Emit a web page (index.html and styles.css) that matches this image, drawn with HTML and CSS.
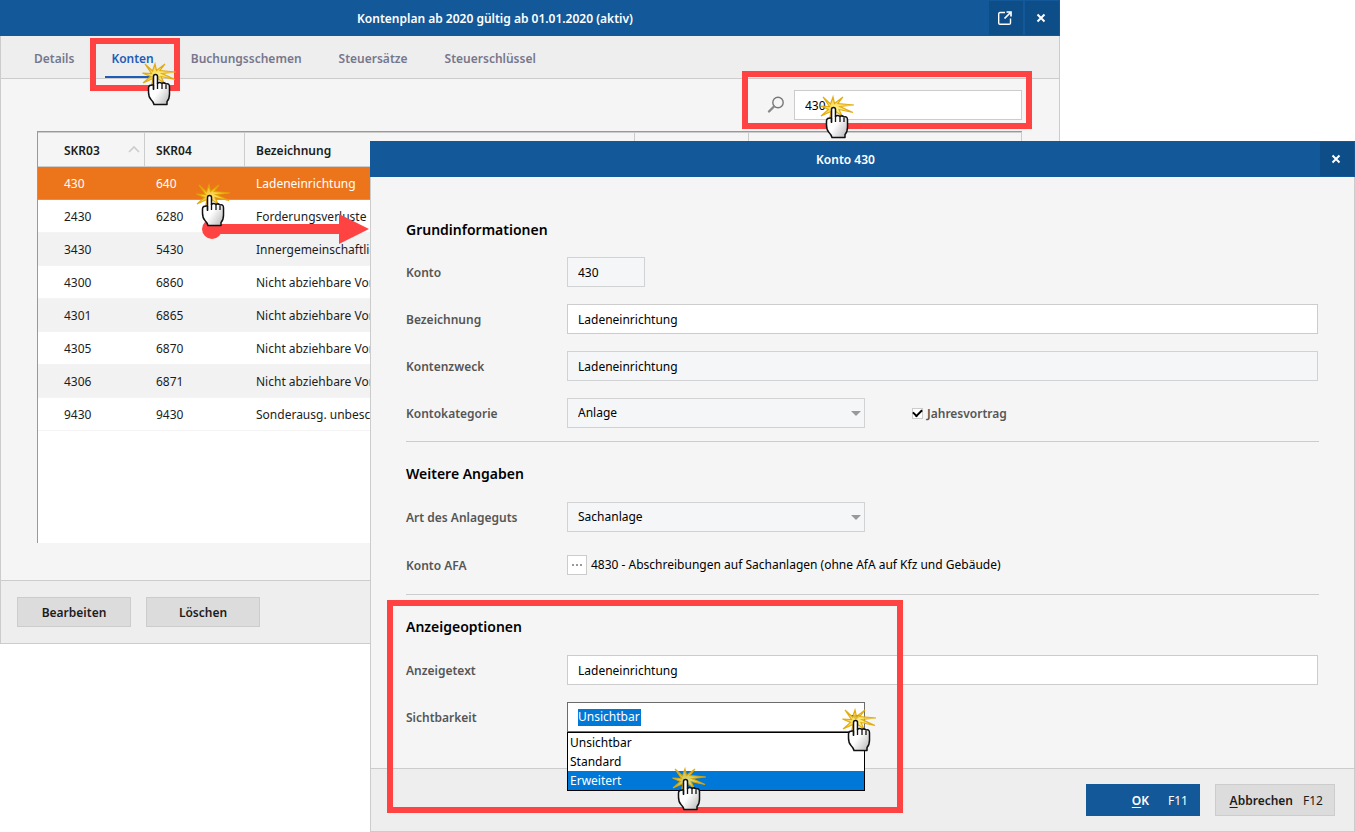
FILE: index.html
```html
<!DOCTYPE html>
<html lang="de">
<head>
<meta charset="utf-8">
<title>Kontenplan</title>
<link rel="stylesheet" href="styles.css">
</head>
<body>
<svg class="defs" aria-hidden="true">
  <defs>
    <linearGradient id="palm" x1="0" y1="0" x2="1" y2="1">
      <stop offset="0.5" stop-color="#fff"/>
      <stop offset="1" stop-color="#b4b4b4"/>
    </linearGradient>
    <radialGradient id="spark">
      <stop offset="0" stop-color="#ffee70"/>
      <stop offset="1" stop-color="#f3c62c"/>
    </radialGradient>
    <symbol id="click" viewBox="0 0 36 46">
      <path d="M3 3L10.500 10L13 3L14.500 9.500L23 3L18 9.500L34 11L20 12.500L33 18.500L19 15.500L22 22L15 17L9 27L11 17.500L1 22L8.500 15.500L0.500 12L9.500 12.500Z" fill="url(#spark)" fill-opacity=".85" stroke="#e0a500" stroke-opacity=".9" stroke-width="1.200"/>
      <path d="M11.500 28V15.500Q11.500 13.500 13.500 13.500Q15.500 13.500 15.500 15.500V22.500Q17.500 20.500 20 22.500Q22 21 24 23Q27.500 22 27.500 26V33Q27.500 38 25 40.500V43.500H12Q11.500 41 9 38.500Q6.500 36 6.500 31V27Q6.500 23.500 11.500 24Z" fill="url(#palm)" stroke="#111" stroke-width="1.500" stroke-linejoin="round"/>
      <path d="M11.500 24V29M15.500 22V28M20 23V28M24 24V28" fill="none" stroke="#111" stroke-width="1.300"/>
    </symbol>
    <symbol id="close" viewBox="0 0 10 10">
      <path d="M1.500 1.500L8.500 8.500M8.500 1.500L1.500 8.500" stroke="#fff" stroke-width="2" fill="none"/>
    </symbol>
  </defs>
</svg>

<main class="desktop">
  <section class="window plan" aria-label="Kontenplan">
    <header class="titlebar">
      <h1 class="title">Kontenplan ab 2020 gültig ab 01.01.2020 (aktiv)</h1>
      <div class="title-actions">
        <button class="title-btn" aria-label="In neuem Fenster öffnen"><svg width="14" height="14" viewBox="0 0 14 14"><path d="M7 1.500H2Q.700 1.500 .700 3V12Q.700 13.300 2 13.300H11Q12.500 13.300 12.500 12V7.500" fill="none" stroke="#fff" stroke-width="1.400"/><path d="M6.500 7.500L12 2M8.500 1H13V5.500" fill="none" stroke="#fff" stroke-width="1.700"/></svg></button>
        <button class="title-btn" aria-label="Schließen"><svg width="10" height="10"><use href="#close"/></svg></button>
      </div>
    </header>
    <nav class="tabs">
      <a class="tab" href="#details">Details</a>
      <a class="tab active" href="#konten">Konten<span class="mark mark-tab"></span><svg class="cursor cursor-tab"><use href="#click"/></svg></a>
      <a class="tab" href="#buchungsschemen">Buchungsschemen</a>
      <a class="tab" href="#steuersaetze">Steuersätze</a>
      <a class="tab" href="#steuerschluessel">Steuerschlüssel</a>
    </nav>
    <div class="plan-body">
      <div class="search">
        <label for="suche" aria-label="Suche"><svg class="lens" width="18" height="18" viewBox="0 0 18 18"><circle cx="11" cy="6.500" r="5.200" fill="none" stroke="#777" stroke-width="1.400"/><path d="M7 10.500L2 15.500" stroke="#888" stroke-width="2.400" stroke-linecap="round"/></svg></label>
        <input class="field" id="suche" type="text" value="430">
        <span class="mark mark-search"></span>
        <svg class="cursor cursor-search"><use href="#click"/></svg>
      </div>
      <div class="grid">
        <table class="accounts">
          <colgroup><col class="c1"><col class="c2"><col class="c3"><col class="c4"><col></colgroup>
          <thead>
            <tr><th>SKR03<svg class="sort" width="12" height="8" viewBox="0 0 12 8"><path d="M1 7L6 2L11 7" fill="none" stroke="#ccc" stroke-width="1.600"/></svg></th><th>SKR04</th><th>Bezeichnung</th><th></th><th></th></tr>
          </thead>
          <tbody>
            <tr class="selected"><td>430</td><td>640</td><td>Ladeneinrichtung</td><td></td><td></td></tr>
            <tr><td>2430</td><td>6280</td><td>Forderungsverluste</td><td></td><td></td></tr>
            <tr><td>3430</td><td>5430</td><td>Innergemeinschaftlicher Erwerb</td><td></td><td></td></tr>
            <tr><td>4300</td><td>6860</td><td>Nicht abziehbare Vorsteuer</td><td></td><td></td></tr>
            <tr><td>4301</td><td>6865</td><td>Nicht abziehbare Vorsteuer</td><td></td><td></td></tr>
            <tr><td>4305</td><td>6870</td><td>Nicht abziehbare Vorsteuer</td><td></td><td></td></tr>
            <tr><td>4306</td><td>6871</td><td>Nicht abziehbare Vorsteuer</td><td></td><td></td></tr>
            <tr><td>9430</td><td>9430</td><td>Sonderausg. unbeschränkt</td><td></td><td></td></tr>
          </tbody>
        </table>
        <svg class="arrow" viewBox="0 0 168 32"><circle cx="10" cy="16" r="10"/><path d="M10 11H137V1L167 16L137 31V21H10Z"/></svg>
        <svg class="cursor cursor-row"><use href="#click"/></svg>
      </div>
    </div>
    <footer class="plan-foot">
      <button class="btn">Bearbeiten</button>
      <button class="btn">Löschen</button>
    </footer>
  </section>

  <section class="window dialog" role="dialog" aria-label="Konto 430">
    <header class="titlebar">
      <h2 class="title">Konto 430</h2>
      <div class="title-actions">
        <button class="title-btn" aria-label="Schließen"><svg width="10" height="10"><use href="#close"/></svg></button>
      </div>
    </header>
    <form class="form">
      <section class="group">
        <h3>Grundinformationen</h3>
        <div class="row"><label for="konto">Konto</label><input class="field locked short" id="konto" type="text" value="430" readonly></div>
        <div class="row"><label for="bez">Bezeichnung</label><input class="field" id="bez" type="text" value="Ladeneinrichtung"></div>
        <div class="row"><label for="zweck">Kontenzweck</label><input class="field locked" id="zweck" type="text" value="Ladeneinrichtung" readonly></div>
        <div class="row"><label for="kat">Kontokategorie</label><span class="drop"><select class="field locked" id="kat"><option>Anlage</option></select></span><span class="check"><input id="jahr" type="checkbox" checked><label for="jahr">Jahresvortrag</label></span></div>
      </section>
      <section class="group">
        <h3>Weitere Angaben</h3>
        <div class="row"><label for="art">Art des Anlageguts</label><span class="drop"><select class="field locked" id="art"><option>Sachanlage</option></select></span></div>
        <div class="row tall"><label for="afa">Konto AFA</label><button class="more" id="afa" type="button" aria-label="Konto wählen"><svg width="11" height="2" viewBox="0 0 11 2"><path d="M0 1H2M4 1H6M8 1H10" stroke="#999" stroke-width="2"/></svg></button><span>4830 - Abschreibungen auf Sachanlagen (ohne AfA auf Kfz und Gebäude)</span></div>
      </section>
      <section class="group">
        <h3>Anzeigeoptionen</h3>
        <div class="row"><label for="text">Anzeigetext</label><input class="field" id="text" type="text" value="Ladeneinrichtung"></div>
        <div class="row"><label for="sicht">Sichtbarkeit</label>
          <span class="drop open"><select class="field" id="sicht"><option>Unsichtbar</option></select>
            <ul class="menu" role="listbox" aria-label="Sichtbarkeit">
              <li role="option">Unsichtbar</li>
              <li role="option">Standard</li>
              <li role="option" class="hot" aria-selected="true">Erweitert</li>
            </ul>
          </span>
        </div>
        <span class="mark mark-options"></span>
        <svg class="cursor cursor-drop"><use href="#click"/></svg>
        <svg class="cursor cursor-option"><use href="#click"/></svg>
      </section>
    </form>
    <footer class="dialog-foot">
      <button class="cmd primary"><b><u>O</u>K</b><span>F11</span></button>
      <button class="cmd"><b><u>A</u>bbrechen</b><span>F12</span></button>
    </footer>
  </section>
</main>
</body>
</html>
```
FILE: styles.css
```css
* { box-sizing: border-box; }
body, h1, h2, h3, ul { margin: 0; padding: 0; }
body {
  background: #fff;
  color: #1c1c1c;
  font: 12px/18px "Noto Sans", sans-serif;
}
button, input, select { font: inherit; color: inherit; margin: 0; }
button { padding: 0; border: 0; }
a { color: inherit; text-decoration: none; }
.defs { position: absolute; width: 0; height: 0; }

.desktop { position: relative; min-height: 100vh; overflow: hidden; }
.window { position: absolute; background: #f5f5f5; }
.plan { top: 0; left: 0; right: 295px; }
.dialog { top: 141px; left: 370px; right: 0; color: #000; }

.titlebar {
  display: flex;
  align-items: center;
  height: 36px;
  padding: 1px;
  background: #135999;
  color: #fff;
}
.title { flex: 1; padding-top: 2px; font-size: 12px; font-weight: 600; line-height: 18px; text-align: center; }
.title-actions { display: flex; gap: 2px; }
.title-btn {
  display: flex;
  align-items: center;
  justify-content: center;
  width: 34px;
  height: 34px;
  padding-right: 2px;
  background: #0d4e88;
}

.tabs {
  display: flex;
  gap: 25px;
  padding-left: 27px;
  background: #eee;
  border: 1px solid #ccc;
  border-top: 0;
  color: #77778c;
  font-weight: 600;
}
.tab { position: relative; padding: 14px 6px 8px; border-bottom: 2px solid transparent; }
.tab.active { color: #1f5cb8; border-color: #1f5cb8; }

.plan-body { padding: 11px 37px 37px 36px; border: solid #ccc; border-width: 0 1px; }
.search { position: relative; display: flex; justify-content: flex-end; align-items: center; gap: 9px; margin-bottom: 11px; }
.search label { display: flex; }
.search .field { width: 228px; flex: none; }

.field {
  flex: 1;
  width: 100%;
  height: 30px;
  padding: 0 10px;
  background: #fff;
  border: 1px solid #ccc;
  border-radius: 0;
  outline: 0;
  color: #000;
}
.locked { background: #f4f6f8; border-color: #d0d2d4; }

.grid {
  position: relative;
  min-height: 412px;
  background: #fff;
  border: solid #999;
  border-width: 1px 0 0 1px;
}
.accounts { width: 100%; table-layout: fixed; border-collapse: separate; border-spacing: 0; }
.c1 { width: 107px; }
.c2 { width: 100px; }
.c3 { width: 390px; }
.c4 { width: 114px; }
.accounts th {
  position: relative;
  height: 35px;
  padding: 2px 11px 0;
  background: #f5f5f5;
  border: solid #ccc;
  border-width: 1px 1px 1px 0;
  font-weight: 600;
  text-align: left;
}
.accounts td {
  height: 33px;
  padding: 2px 11px 0;
  border-bottom: 1px solid #f4f4f4;
  white-space: nowrap;
}
.accounts th:first-child, .accounts td:first-child { padding-left: 26px; }
.accounts tbody tr:nth-child(odd) { background: #f2f2f2; }
.accounts tbody tr.selected { background: #ec751b; color: #fff; }
.accounts .selected td { border-bottom-color: #a0a0a0; }
.sort { position: absolute; right: 4px; top: 12px; }

.plan-foot { display: flex; gap: 15px; padding: 16px; background: #eee; border: 1px solid #ccc; }
.btn { width: 114px; height: 30px; padding-top: 2px; background: #dcdcdc; border: 1px solid #ccc; font-weight: 600; }

.form { padding: 20px 35px 23px; border: solid #ccc; border-width: 0 1px; }
.group { position: relative; padding: 21px 0 13px; }
.group:first-child { padding-top: 22px; }
.group + .group { border-top: 1px solid #ccc; }
.group h3 { margin-bottom: 17px; font-size: 14px; font-weight: 600; line-height: 22px; }
.group:first-child h3 { margin-bottom: 16px; }
.row { display: flex; align-items: center; min-height: 30px; padding-right: 1px; }
.row + .row { margin-top: 17px; }
.row.tall { min-height: 32px; }
.row > label { flex: none; width: 161px; }
.row label { padding-top: 2px; color: #555; font-weight: 600; }
.short { flex: none; width: 78px; }

.drop { position: relative; width: 298px; }
.drop select { display: block; appearance: none; }
.drop::after {
  content: "";
  position: absolute;
  right: 4px;
  top: 13px;
  border: 5px solid transparent;
  border-top-color: #999;
  border-bottom: 0;
  pointer-events: none;
}
.drop.open::after { border-top-color: #111; }
.drop.open select {
  border-color: #6c6c6c;
  background: linear-gradient(#0078d7, #0078d7) 10px center / 63px 17px no-repeat #fff;
  color: #fff;
}
.menu {
  position: absolute;
  z-index: 2;
  top: 30px;
  left: 0;
  right: 0;
  background: #fff;
  border: 1px solid #000;
  list-style: none;
}
.menu li { padding: 1px 0 0 2px; line-height: 18px; }
.menu .hot { background: #0078d7; color: #fff; }

.check { display: flex; align-items: center; gap: 4px; margin-left: 47px; }
.check input {
  appearance: none;
  width: 11px;
  height: 11px;
  background: #fff;
  border: 1px solid #ccc;
  display: grid;
  place-items: center;
}
.check input:checked::before {
  content: "";
  width: 7px;
  height: 4px;
  margin-top: -2px;
  border: solid #000;
  border-width: 0 0 2px 2px;
  rotate: -45deg;
}
.more {
  display: grid;
  place-items: center;
  width: 20px;
  height: 20px;
  margin-right: 4px;
  background: #fff;
  border: 1px solid #ccc;
}

.dialog-foot { display: flex; justify-content: flex-end; gap: 15px; padding: 15px 19px; background: #eee; border: 1px solid #ccc; }
.cmd {
  display: flex;
  align-items: center;
  justify-content: flex-end;
  gap: 10px;
  width: 120px;
  height: 32px;
  padding: 2px 11px 0;
  background: #dcdcdc;
  border: 1px solid #ccc;
  color: #1c1c1c;
}
.cmd b { font-weight: 600; }
.cmd u { text-underline-offset: 2px; }
.cmd.primary { width: 114px; gap: 19px; background: #135999; border-color: #135999; color: #fff; }

/* Callouts lying over the windows */
.mark { position: absolute; z-index: 3; border: 6px solid #ff4343; pointer-events: none; }
.mark-tab { left: -15px; top: 2px; width: 90px; height: 53px; }
.mark-search { right: -10px; top: -19px; width: 290px; height: 58px; }
.mark-options { left: -19px; top: 5px; width: 516px; height: 213px; }
.cursor { position: absolute; z-index: 4; width: 36px; height: 46px; pointer-events: none; }
.cursor-tab { left: 37px; top: 25px; }
.cursor-search { right: 166px; top: 4px; }
.cursor-row { left: 158px; top: 50px; }
.cursor-drop { left: 436px; top: 112px; }
.cursor-option { left: 266px; top: 171px; }
.arrow { position: absolute; left: 164px; top: 81px; width: 168px; height: 32px; fill: #ff4343; }
```
